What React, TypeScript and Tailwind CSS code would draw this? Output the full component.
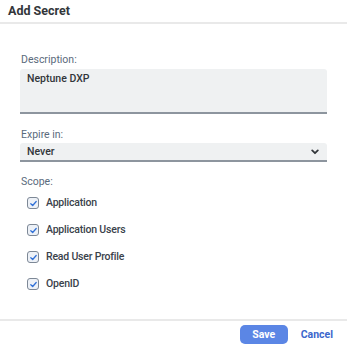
import React from "react";

const Check = () => (
  <span className="flex h-[12px] w-[12px] items-center justify-center rounded-[3px] border border-[#7d8896] bg-[#edf1f7]">
    <svg width="9" height="9" viewBox="0 0 10 10" fill="none">
      <path d="M2 5.2 L4.1 7.2 L8 2.8" stroke="#2f6fd6" strokeWidth="1.4" strokeLinecap="round" strokeLinejoin="round" />
    </svg>
  </span>
);

export default function App() {
  const scopes = ["Application", "Application Users", "Read User Profile", "OpenID"];
  return (
    <div className="flex h-[348px] w-[347px] flex-col bg-white text-[10.5px] text-[#32363a]" style={{ fontFamily: "Roboto, 'Liberation Sans', Arial, sans-serif" }}>
      <div className="flex h-[24px] items-center border-b-2 border-[#e9e9e9] pl-[8px] text-[12.5px] font-bold text-[#32363a]">
        Add Secret
      </div>
      <div className="flex flex-1 flex-col px-[20px] pt-[29px]">
        <div className="pl-[1px] leading-[14px] text-[#5a6a7c]">Description:</div>
        <div className="mt-[2px] h-[45px] rounded-t-[3px] border-b-2 border-[#8d959e] bg-[#eff1f2] px-[7px] pt-[3px] font-medium leading-[14px]">
          Neptune DXP
        </div>
        <div className="mt-[14px] pl-[1px] leading-[14px] text-[#5a6a7c]">Expire in:</div>
        <div className="mt-[1px] flex h-[19px] items-center justify-between rounded-t-[3px] border-b-2 border-[#8d959e] bg-[#eff1f2] pl-[7px] pr-[8px] font-medium">
          <span>Never</span>
          <svg width="8" height="6" viewBox="0 0 10 7" fill="none">
            <path d="M1.5 1.5 L5 5 L8.5 1.5" stroke="#32363a" strokeWidth="2.2" strokeLinecap="round" strokeLinejoin="round" />
          </svg>
        </div>
        <div className="mt-[13px] pl-[1px] leading-[14px] text-[#5a6a7c]">Scope:</div>
        <div className="mt-[7px] flex flex-col gap-[13px] pl-[7px]">
          {scopes.map((s) => (
            <div key={s} className="flex h-[14px] items-center gap-[7px]">
              <Check />
              <span className="font-medium tracking-[-0.2px] text-[#3a424b]">{s}</span>
            </div>
          ))}
        </div>
      </div>
      <div className="flex h-[29px] items-center justify-end border-t-2 border-[#e9e9e9] pr-[14px]">
        <button className="h-[19px] w-[48px] rounded-[5px] bg-[#5b86e5] text-[10.5px] font-bold text-white">Save</button>
        <button className="ml-[13px] text-[10.5px] font-bold text-[#3c67cc]">Cancel</button>
      </div>
    </div>
  );
}
